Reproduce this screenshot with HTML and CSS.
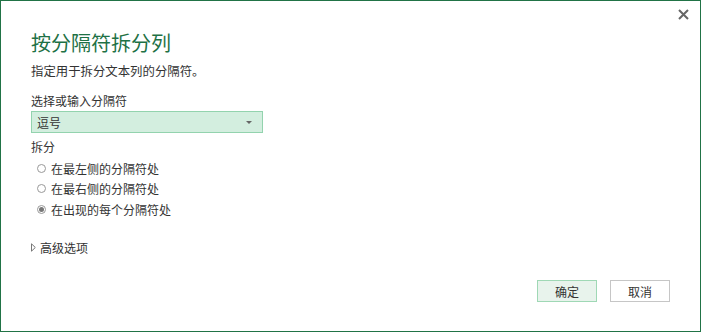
FILE: index.html
```html
<!DOCTYPE html>
<html lang="zh-CN">
  <head>
    <meta charset="UTF-8" />
    <title>按分隔符拆分列</title>
    <link rel="stylesheet" href="styles.css">
  </head>
  <body>
    <main class="dialog">
      <button class="close" aria-label="关闭">
        <svg width="11" height="11" viewBox="0 0 11 11">
          <path d="M1 1L10 10M10 1L1 10" stroke="#666" stroke-width="2" fill="none" />
        </svg>
      </button>
      <h1 class="title">按分隔符拆分列</h1>
      <p class="desc">指定用于拆分文本列的分隔符。</p>

      <label class="label">选择或输入分隔符</label>
      <div class="select">
        <span>逗号</span>
        <span class="caret"></span>
      </div>

      <div class="label split-label">拆分</div>
      <div class="radios">
        <div class="radio"><span class="dot"></span>在最左侧的分隔符处</div>
        <div class="radio"><span class="dot"></span>在最右侧的分隔符处</div>
        <div class="radio checked"><span class="dot"></span>在出现的每个分隔符处</div>
      </div>

      <div class="advanced">
        <svg width="5" height="9" viewBox="0 0 5 9">
          <path d="M0.5 0.8L4.3 4.5L0.5 8.2Z" stroke="#777" stroke-width="1" fill="none" />
        </svg>
        <span>高级选项</span>
      </div>

      <div class="actions">
        <button class="btn primary">确定</button>
        <button class="btn">取消</button>
      </div>
    </main>
  </body>
</html>
```

FILE: styles.css
```css
* {
  box-sizing: border-box;
  margin: 0;
  padding: 0;
}
body {
  background: #fff;
  font-family: "Noto Sans CJK SC", "Noto Sans", sans-serif;
  color: #333;
}
.dialog {
  position: relative;
  width: 701px;
  height: 332px;
  border: 1px solid #217346;
  padding: 29px 0 0 30px;
  display: flex;
  flex-direction: column;
  align-items: flex-start;
}
.close {
  position: absolute;
  top: 8px;
  right: 11px;
  border: none;
  background: none;
  width: 11px;
  height: 11px;
  display: flex;
}
.title {
  font-size: 20px;
  line-height: 26px;
  font-weight: normal;
  color: #1e7145;
}
.desc {
  margin-top: 7px;
  font-size: 12.4px;
  line-height: 16px;
}
.label {
  font-size: 12px;
  line-height: 16px;
  margin-top: 14px;
}
.select {
  margin-top: 2px;
  width: 232px;
  height: 22px;
  background: #d3eedf;
  border: 1px solid #93d3ae;
  display: flex;
  align-items: center;
  justify-content: space-between;
  padding: 0 10px 0 5px;
  font-size: 12px;
}
.caret {
  width: 0;
  height: 0;
  border-left: 3px solid transparent;
  border-right: 3px solid transparent;
  border-top: 3px solid #666;
}
.split-label {
  margin-top: 6px;
}
.radios {
  display: flex;
  flex-direction: column;
  margin-top: 3px;
}
.radio {
  display: flex;
  align-items: center;
  gap: 5px;
  height: 20.5px;
  padding-left: 6px;
  font-size: 12px;
}
.radio .dot {
  width: 9px;
  height: 9px;
  border: 1px solid #999;
  border-radius: 50%;
  display: flex;
  align-items: center;
  justify-content: center;
}
.radio.checked .dot::after {
  content: "";
  width: 5px;
  height: 5px;
  border-radius: 50%;
  background: #777;
}
.advanced {
  margin-top: 20px;
  display: flex;
  align-items: center;
  gap: 4px;
  font-size: 12px;
  line-height: 16px;
}
.actions {
  align-self: stretch;
  margin-top: auto;
  margin-bottom: 29px;
  display: flex;
  justify-content: flex-end;
  gap: 13px;
  padding-right: 30px;
}
.btn {
  width: 60px;
  height: 22px;
  border: 1px solid #c6c6c6;
  background: #fff;
  font-family: inherit;
  font-size: 12px;
  color: #333;
}
.btn.primary {
  background: #e8f3ec;
  border-color: #9fd8b5;
}
```
